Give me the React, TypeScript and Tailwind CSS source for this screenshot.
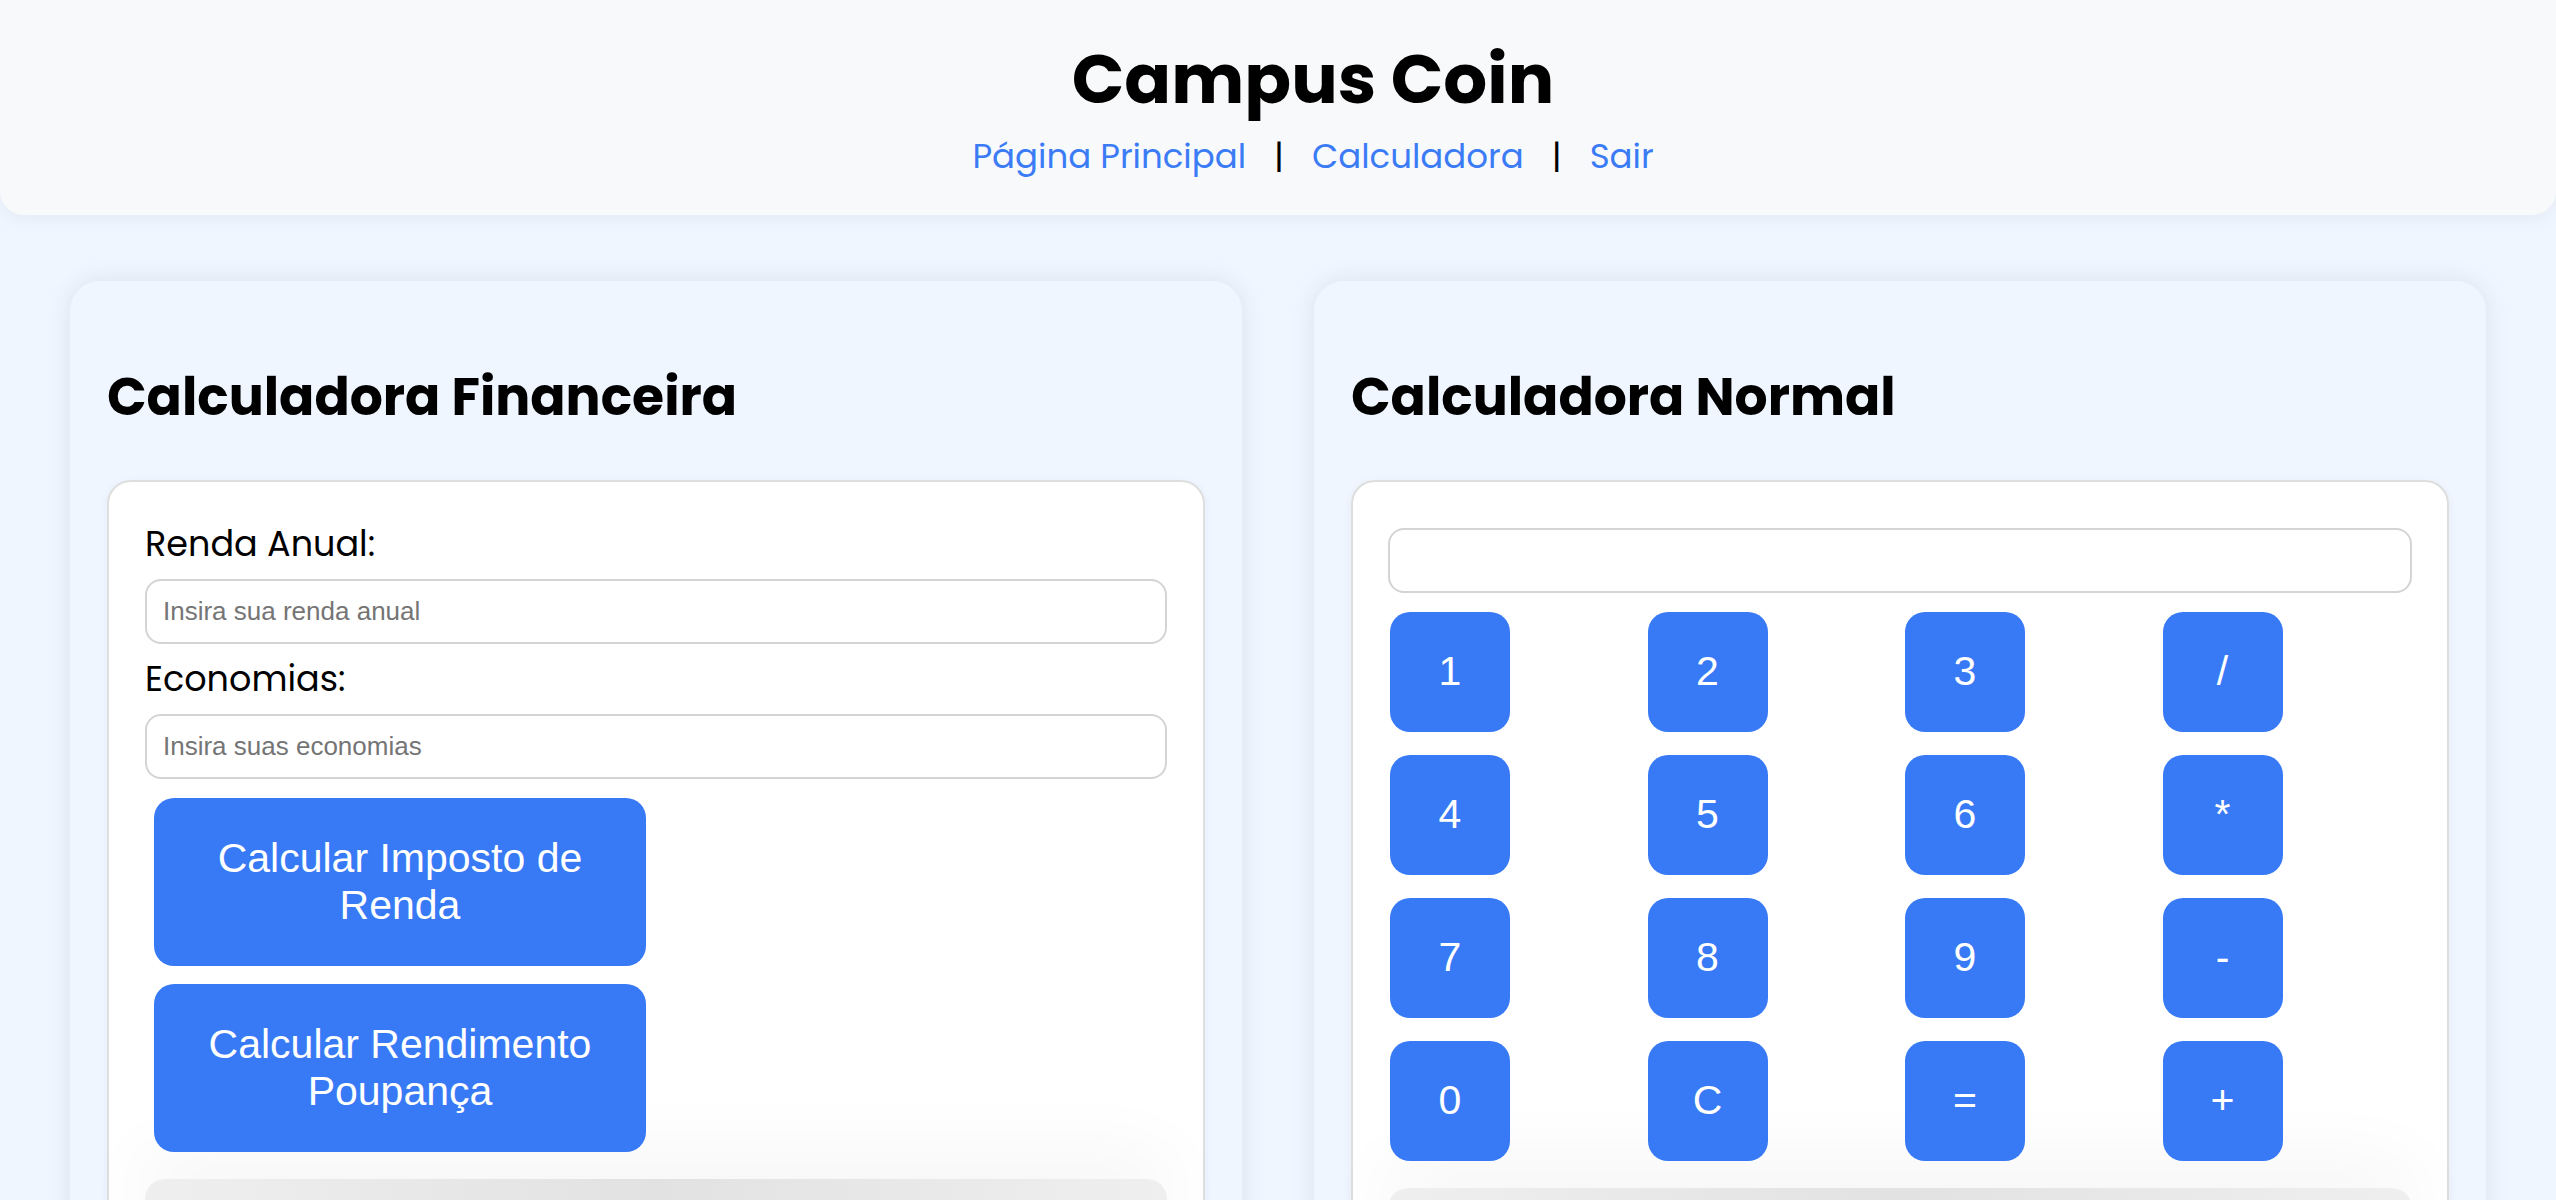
import React from "react";

const poppins = "font-['Poppins','Inter',sans-serif]";
const arial = "font-['Liberation_Sans','Arial',sans-serif]";

const Header = () => {
  return (
    <header className="bg-[#f8f9fb] rounded-b-[24px] shadow-[0_4px_20px_rgba(0,0,0,0.05)] pt-[40px] pb-[34px] pl-[70px] flex flex-col items-center">
      <h1 className={`${poppins} text-[69px] leading-[78px] font-bold text-black`}>
        Campus Coin
      </h1>
      <nav className={`${poppins} mt-[13px] flex items-center gap-[28px] text-[34px] leading-[50px]`}>
        <a href="#" className="text-[#3b7cf6]">Página Principal</a>
        <span className="text-black">|</span>
        <a href="#" className="text-[#3b7cf6]">Calculadora</a>
        <span className="text-black">|</span>
        <a href="#" className="text-[#3b7cf6]">Sair</a>
      </nav>
    </header>
  );
};

const Field = ({ label, placeholder }: { label: string; placeholder: string }) => {
  return (
    <div className="flex flex-col">
      <label className={`${poppins} text-[35px] leading-[54px] text-black mb-[8px]`}>{label}</label>
      <input
        placeholder={placeholder}
        className={`${arial} h-[65px] w-full rounded-[16px] border-2 border-[#d4d4d4] bg-white px-[16px] text-[26px] placeholder:text-[#757575] outline-none`}
      />
    </div>
  );
};

const ResultBox = () => (
  <div className="h-[60px] rounded-t-[20px] bg-gradient-to-r from-[#efefef] via-[#e2e2e2] to-[#efefef] shadow-[0_-20px_80px_rgba(0,0,0,0.05)]" />
);

const FinanceCard = () => {
  return (
    <section className="rounded-[30px] bg-[#eff6ff] shadow-[0_0_24px_rgba(30,50,90,0.1)] px-[37px] pt-[84px] h-[980px] overflow-hidden">
      <h2 className={`${poppins} text-[52px] leading-[64px] font-bold text-black`}>Calculadora Financeira</h2>
      <div className="mt-[51px] rounded-[24px] border-2 border-[#dedede] bg-white px-[36px] pt-[35px] shadow-[0_2px_10px_rgba(0,0,0,0.05)] h-[800px]">
        <Field label="Renda Anual:" placeholder="Insira sua renda anual" />
        <div className="mt-[8px]">
          <Field label="Economias:" placeholder="Insira suas economias" />
        </div>
        <div className="ml-[9px] mt-[19px] flex flex-col gap-[18px]">
          <button className={`${arial} w-[492px] h-[168px] rounded-[20px] bg-[#387af5] text-white text-[41px] leading-[47px] px-[40px]`}>
            Calcular Imposto de Renda
          </button>
          <button className={`${arial} w-[492px] h-[168px] rounded-[20px] bg-[#387af5] text-white text-[41px] leading-[47px] px-[36px]`}>
            Calcular Rendimento Poupança
          </button>
        </div>
        <div className="mt-[27px]">
          <ResultBox />
        </div>
      </div>
    </section>
  );
};

const keys = ["1", "2", "3", "/", "4", "5", "6", "*", "7", "8", "9", "-", "0", "C", "=", "+"];

const NormalCard = () => {
  return (
    <section className="rounded-[30px] bg-[#eff6ff] shadow-[0_0_24px_rgba(30,50,90,0.1)] px-[37px] pt-[84px] h-[980px] overflow-hidden">
      <h2 className={`${poppins} text-[52px] leading-[64px] font-bold text-black`}>Calculadora Normal</h2>
      <div className="mt-[51px] rounded-[24px] border-2 border-[#dedede] bg-white px-[35px] pt-[46px] shadow-[0_2px_10px_rgba(0,0,0,0.05)] h-[800px]">
        <input className={`${arial} h-[65px] w-full rounded-[16px] border-2 border-[#d4d4d4] bg-white px-[16px] text-[26px] outline-none`} />
        <div className="mt-[19px] ml-[2px] grid grid-cols-[repeat(4,257.5px)] gap-y-[23px]">
          {keys.map((k) => (
            <button
              key={k}
              className={`${arial} w-[120px] h-[120px] rounded-[20px] bg-[#387af5] text-white text-[41px]`}
            >
              {k}
            </button>
          ))}
        </div>
        <div className="mt-[27px]">
          <ResultBox />
        </div>
      </div>
    </section>
  );
};

export default function App() {
  return (
    <div className="min-h-screen w-full bg-[#eff6ff] overflow-hidden h-[1200px]">
      <Header />
      <main className="mt-[66px] px-[70px] grid grid-cols-2 gap-[72px]">
        <FinanceCard />
        <NormalCard />
      </main>
    </div>
  );
}
